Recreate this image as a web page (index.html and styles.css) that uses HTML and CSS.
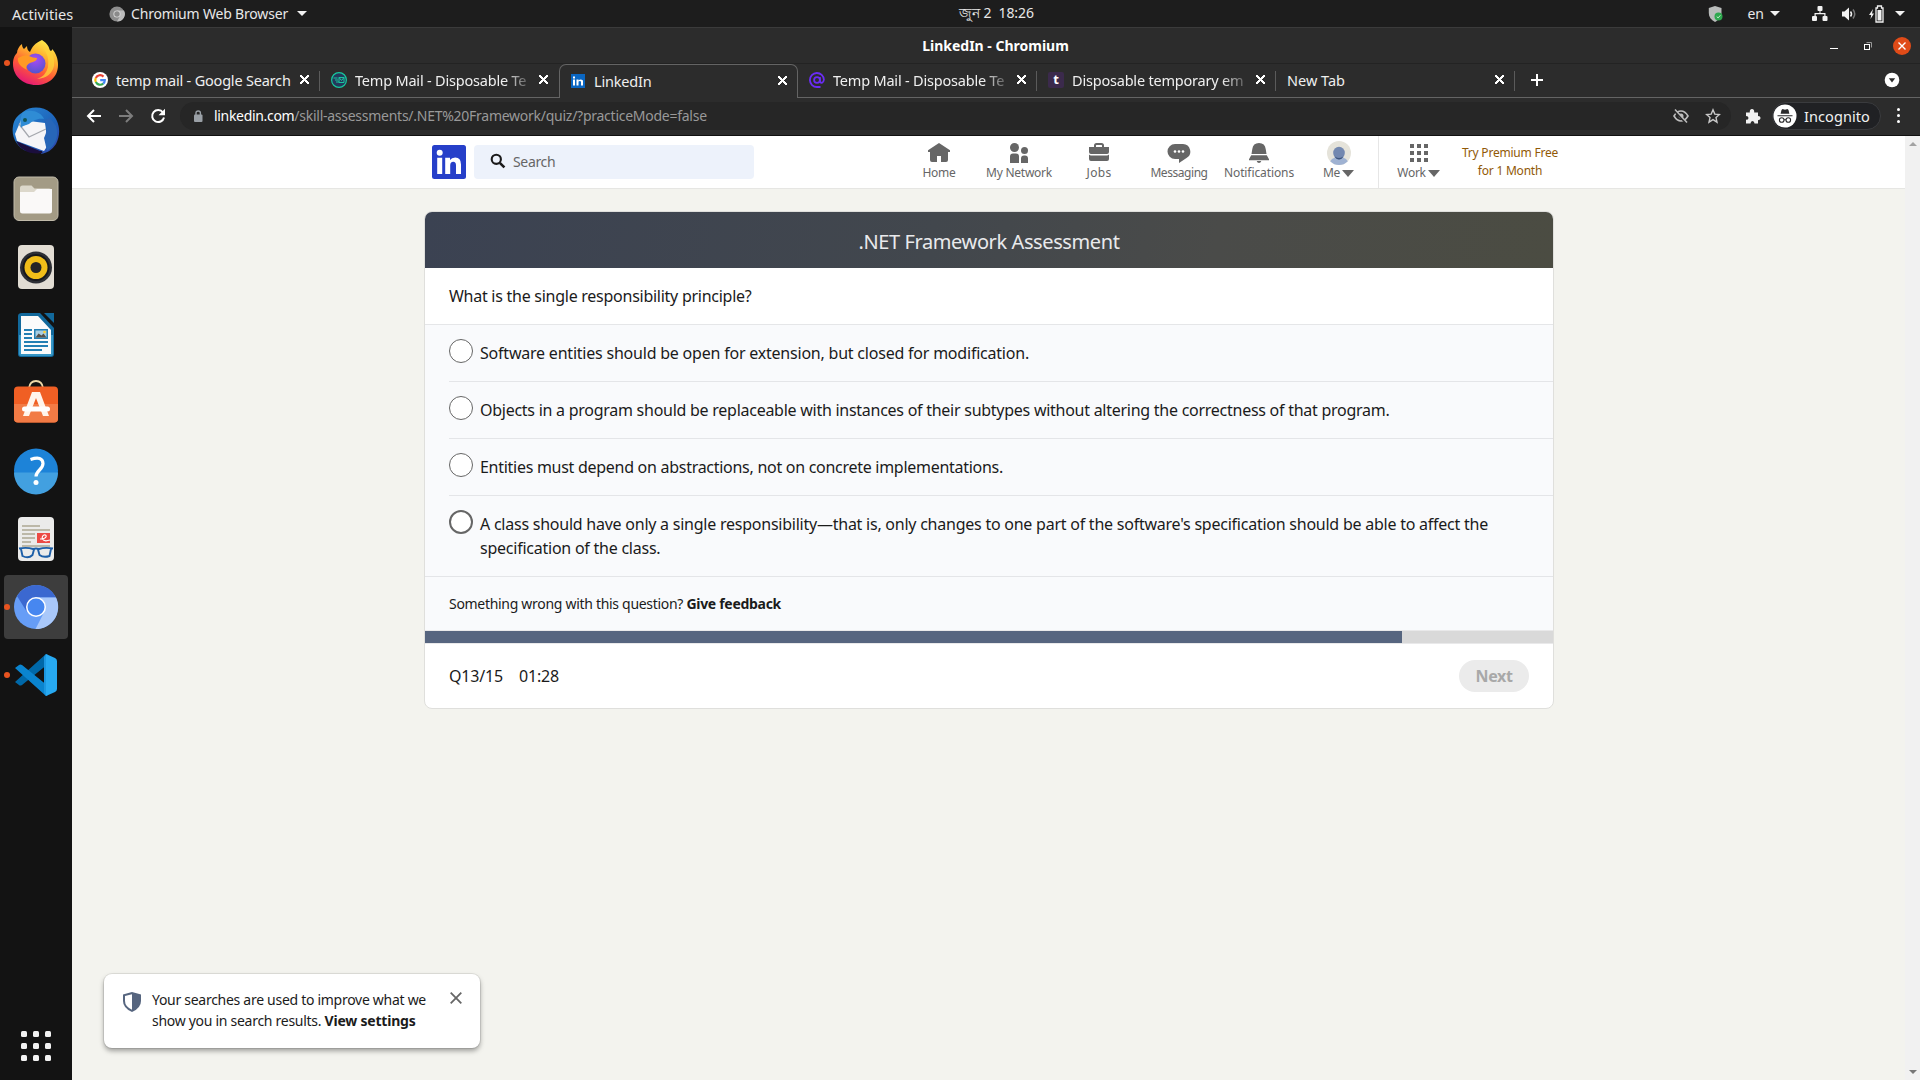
FILE: index.html
```html
<!DOCTYPE html>
<html lang="en">
<head>
<meta charset="utf-8">
<title>LinkedIn - Chromium</title>
<link rel="stylesheet" href="styles.css">
</head>
<body>
<div class="desktop">
  <header class="topbar">
    <div class="top-left">
      <span class="activities">Activities</span>
      <svg class="app-ico" viewBox="0 0 16 16"><circle cx="8" cy="8" r="7.600" fill="#8d8d8d"/><path d="M8 4.400h7A7.600 7.600 0 0 1 8 15.600l3-5.400z" fill="#bdbdbd"/><circle cx="8" cy="8" r="3.600" fill="#dadada"/><circle cx="8" cy="8" r="2.700" fill="#8a8a8a"/></svg>
      <span class="app-name">Chromium Web Browser</span>
      <i class="caret"></i>
    </div>
    <div class="clock">জুন 2&nbsp; 18:26</div>
    <div class="top-right">
      <svg width="16" height="18" viewBox="0 0 16 18"><path d="M7 1l6.500 2v5c0 4-3 7-6.500 9C3 15 .8 12 .8 8V3z" fill="#b9bcbb"/><circle cx="10.500" cy="11.500" r="4" fill="#2fa84f"/><path d="M8.700 11.500l1.400 1.400 2.300-2.600" fill="none" stroke="#c8f0d0" stroke-width="1"/></svg>
      <span class="lang">en</span><i class="caret"></i>
      <svg class="net" width="16" height="16" viewBox="0 0 16 16" fill="#f2f2f2"><rect x="5.500" y="0" width="5" height="5" rx="1"/><rect x="0" y="10" width="5" height="5" rx="1"/><rect x="10.500" y="10" width="5" height="5" rx="1"/><path d="M7.500 4h1v3H13.500V10h-1.200V8.200H3.700V10H2.500V7h5z"/></svg>
      <svg class="vol" width="16" height="16" viewBox="0 0 16 16"><path d="M1 5.500h2.500L8 1.500v13l-4.500-4H1z" fill="#f2f2f2"/><path d="M9.500 5.500q2 2.500 0 5" fill="none" stroke="#f2f2f2" stroke-width="1.500"/><path d="M12 3.500q3.500 4.500 0 9" fill="none" stroke="#777" stroke-width="1.500"/></svg>
      <svg class="bat" width="16" height="18" viewBox="0 0 16 18"><path d="M4 4L0 10h2.200L1.500 14 5 8.500H3z" fill="#f2f2f2"/><path d="M7 3h1.500V1h4v2H14v14H7z" fill="none" stroke="#f2f2f2" stroke-width="1.300"/><rect x="8.500" y="5" width="4" height="10.500" fill="#f2f2f2"/></svg>
      <i class="caret end-caret"></i>
    </div>
  </header>

  <div class="workspace">
    <nav class="dock">
      <div class="slot run"><svg viewBox="0 0 48 48"><defs><linearGradient id="fx" x1=".8" y1="0" x2=".3" y2="1"><stop offset="0" stop-color="#fff44f"/><stop offset=".35" stop-color="#ffb02e"/><stop offset=".65" stop-color="#ff5a36"/><stop offset="1" stop-color="#e3157a"/></linearGradient><radialGradient id="fp" cx=".5" cy=".3" r=".8"><stop offset="0" stop-color="#a94af5"/><stop offset="1" stop-color="#4756c8"/></radialGradient></defs><path d="M30 1c6 4 7 7 8 11 2 0 2-1 2-2 4 4 6 10 6 16 0 12-9 20-22 20S1 37 1 25c0-6 2-9 4-11 0-3 2-7 5-9 0 3 1 4 2 5l3-3c0 3 1 5 3 6 2-5 5-9 12-12z" fill="url(#fx)"/><circle cx="23.500" cy="24.500" r="10" fill="url(#fp)"/><path d="M6 19q7-4 11-2 4 2 8 2c0 3-4 4-7 5-4 2-4 5-3 7-6-3-10-7-9-12z" fill="#ff9a24"/><path d="M30 8q8 8 6 20-2 9-11 12 14-1 17-13 1-10-4-16-4 0-8-3z" fill="#ffd43a" opacity=".75"/></svg></div>
      <div class="slot"><svg viewBox="0 0 48 48"><defs><linearGradient id="tb" x1="0" y1="0" x2="1" y2="1"><stop offset="0" stop-color="#2a8ad6"/><stop offset=".6" stop-color="#1d62b9"/><stop offset="1" stop-color="#3441a8"/></linearGradient></defs><path d="M11 5C18-1 31-1 39 6c8 7 11 19 5 31-4 6-9 9-15 10l1-3H14C5 40-1 30 1 19 2 12 6 8 11 5z" fill="url(#tb)"/><path d="M3 27l6-14 24 3 3 22-4 6L5 34z" fill="#f5f5f7"/><path d="M7 17l10 13 17-8" fill="none" stroke="#a5a8ae" stroke-width="1.300"/><path d="M11 5c9-3 18 0 21 7-7-1-11 2-15 5-4 2-6 1-8 4-1-5-1-11 2-16z" fill="#2f8cd5"/><circle cx="13" cy="13" r="2" fill="#155"/><path d="M4 34l24 10 3 2C18 48 9 44 4 34z" fill="#1b0e3d"/><path d="M32 13c4 6 3 12 0 18l3 13c9-6 12-15 9-25l-6-8z" fill="#2766b8"/></svg></div>
      <div class="slot"><svg viewBox="0 0 48 48"><rect x="2" y="2" width="44" height="43.500" rx="5" fill="#a39b85" stroke="#c1bbaa"/><path d="M8 17V13q0-2.500 2.500-2.500h9l3 3H37q3 0 3 3v4z" fill="#dcd8cb"/><path d="M8 17h14l3-3h15v22q0 2.500-2.500 2.500h-27Q8 38.500 8 36z" fill="#faf9f8"/></svg></div>
      <div class="slot"><svg viewBox="0 0 48 48"><rect x="6" y="2" width="36" height="44" rx="4" fill="#e2ddd4"/><circle cx="24" cy="24.500" r="16" fill="#2d2f35"/><circle cx="24" cy="24.500" r="13.500" fill="#17181c"/><circle cx="24" cy="24.500" r="11.500" fill="#f0bd19"/><circle cx="24" cy="24.500" r="5.500" fill="#232427"/></svg></div>
      <div class="slot"><svg viewBox="0 0 48 48"><path d="M10 2h18l14 15v26q0 3-3 3H9q-3 0-3-3V5q0-3 4-3z" fill="#12699c"/><path d="M7 24h34v19q0 2-2 2H9q-2 0-2-2z" fill="#3796c5"/><path d="M9 5h17l13 14v24H9z" fill="#fbfbfb"/><path d="M32 2h10v10z" fill="#12699c"/><path d="M12 18h8v2h-8zM12 22h8v2h-8zM12 26h8v2h-8zM12 30h24v2H12zM12 34h24v2H12zM12 38h18v2H12z" fill="#247fb3"/><rect x="22" y="18" width="14" height="10" fill="#247fb3"/><rect x="23.500" y="19.500" width="11" height="7" fill="#a7cde2"/><path d="M23.500 26.500l3-4 3 2 2-2 3 4z" fill="#55504a"/><circle cx="32.500" cy="21" r="1.300" fill="#ffd02e"/></svg></div>
      <div class="slot"><svg viewBox="0 1 48 48"><path d="M17 10q1-7 7-7t7 7" fill="none" stroke="#eed9a8" stroke-width="1.800"/><rect x="2" y="8.500" width="44" height="36" rx="4" fill="#f05f24"/><path d="M2 26h44v14.500q0 4-4 4H6q-4 0-4-4z" fill="#f27b45"/><path d="M20 14h8l9 24h-6l-7-18-7 18h-6z" fill="#fff5ec"/><rect x="10" y="28.500" width="28" height="5" rx="2.500" fill="#fff"/></svg></div>
      <div class="slot"><svg viewBox="0 .5 48 48"><circle cx="24" cy="24" r="22" fill="#1d83d8"/><path d="M2 26h44a22 22 0 0 1-44 0z" fill="#42a0e0"/><path d="M18.500 13q12-4 12.500 4c0 6-7 7-7 13" fill="none" stroke="#fff" stroke-width="3.200"/><circle cx="24" cy="36" r="2.500" fill="#fff"/></svg></div>
      <div class="slot"><svg viewBox="0 0 48 48"><rect x="6" y="2" width="36" height="44" rx="4" fill="#ebebea"/><path d="M10 10h18v2H10zM10 14h28v2H10zM10 18h13v2H10zM10 22h13v2H10zM10 26h9v2h-9zM10 30h28v2H10z" fill="#bcb8a8"/><rect x="25" y="18" width="13" height="10" fill="#ec4a44"/><path d="M28 24c8 0 7-5 4-4s-3 8 6 5" fill="none" stroke="#fff" stroke-width="1.200"/><path d="M7 33.500q8-1.500 14 .5 3-1 6 0 6-2 14-.5M9 34l1.500 7q6 3 10-1l1.500-5.500M39 34l-1.500 7q-6 2-10-1L26 34.500" fill="none" stroke="#1d5fa8" stroke-width="1.900"/></svg></div>
      <div class="slot run focused"><svg viewBox="0 0 48 48"><circle cx="24" cy="24" r="22" fill="#669df6"/><path d="M5 13A22 22 0 0 1 44 14.500H24L15 29z" fill="#3b68d0"/><path d="M44 14.500H25l8 13-9.500 18.500A22 22 0 0 0 44 14.500z" fill="#a9c8fa"/><circle cx="24" cy="24" r="10" fill="#fff"/><circle cx="24" cy="24" r="8.500" fill="#4787f0"/></svg></div>
      <div class="slot run"><svg viewBox="0 0 48 48"><path d="M3 31l4 3q1 1 3 0L36 13V4l-2-1z" fill="#0068a8"/><path d="M3 17l4-3q1-1 3 0l26 21v9l-2 1z" fill="#0a84cf"/><path d="M34 3l9 4q2 1 2 3v28q0 2-2 3l-9 4V3z" fill="#27a9f1"/><path d="M34 3q-1 1-2 3v36q1 2 2 3V3z" fill="#1c96e0"/></svg></div>
      <div class="apps"><b></b><b></b><b></b><b></b><b></b><b></b><b></b><b></b><b></b></div>
    </nav>

    <div class="window">
      <div class="titlebar">
        <span class="win-title">LinkedIn - Chromium</span>
        <div class="win-btns">
          <svg width="10" height="10" viewBox="0 0 10 10"><path d="M1 7.500h8" stroke="#fff"/></svg>
          <svg width="10" height="10" viewBox="0 0 10 10" fill="none"><rect x="1.500" y="3.500" width="5" height="5" stroke="#fff"/><path d="M3.500 1.500h5v5" stroke="#999"/></svg>
          <svg width="18" height="18" viewBox="0 0 18 18"><circle cx="9" cy="9" r="9" fill="#e04b18"/><path d="M5.500 5.500l7 7m0-7l-7 7" stroke="#fff" stroke-width="1.400"/></svg>
        </div>
      </div>
      <div class="tabs">
        <div class="edge"></div>
        <div class="tab"><svg class="fav" viewBox="0 0 16 16"><circle cx="8" cy="8" r="8" fill="#fff"/><g fill="none" stroke-width="2.200"><path d="M11.500 4.600A4.800 4.800 0 0 0 3.800 5.900" stroke="#ea4335"/><path d="M3.800 5.900a4.800 4.800 0 0 0 0 4.200" stroke="#fbbc05"/><path d="M3.800 10.100a4.800 4.800 0 0 0 7.400 1.500" stroke="#34a853"/><path d="M11.200 11.600A4.500 4.500 0 0 0 12.800 8.200H8.200" stroke="#4285f4"/></g></svg><span class="tab-t">temp mail - Google Search</span><i class="x"></i></div>
        <div class="tab"><svg class="fav" viewBox="0 0 16 16"><circle cx="8" cy="8" r="7.400" fill="#24385b" stroke="#17c9a0" stroke-width="1.200"/><path d="M2.500 6h4M4 8h3M5 10h3M8 5.500h5v5H8zM8 5.500l2.500 3 2.500-3" fill="none" stroke="#18c79e"/></svg><span class="tab-t fade">Temp Mail - Disposable Te</span><i class="x"></i></div>
        <div class="tab active"><svg class="fav" viewBox="0 0 16 16"><rect x="1" y="1" width="14" height="14" fill="#0a66c2"/><path d="M3 6.500h2v6H3zM3 3.500h2v2H3zM6.500 6.500h2v1q2-2 4.500 0v5h-2V8.500q-1.200-1-2.500 0v4h-2z" fill="#fff"/></svg><span class="tab-t">LinkedIn</span><i class="x"></i></div>
        <div class="tab"><svg class="fav" viewBox="0 0 16 16"><circle cx="8" cy="8" r="2.900" fill="none" stroke="#6b2cf5" stroke-width="1.800"/><path d="M10.900 5v4q.3 2 2 1.800 1.800-.6 2-3A7 7 0 1 0 8 15h3.500" fill="none" stroke="#6b2cf5" stroke-width="1.800"/></svg><span class="tab-t fade">Temp Mail - Disposable Te</span><i class="x"></i></div>
        <div class="tab"><span class="fav tfav">t</span><span class="tab-t fade">Disposable temporary em</span><i class="x"></i></div>
        <div class="tab"><span class="tab-t wide">New Tab</span><i class="x"></i></div>
        <div class="tab-rest"><svg width="14" height="14" viewBox="0 0 14 14"><path d="M7 1v12M1 7h12" stroke="#fff" stroke-width="2"/></svg><svg width="16" height="16" viewBox="0 0 16 16"><circle cx="8" cy="8" r="7.300" fill="#fff"/><path d="M4.800 6.200h6.400L8 10.500z" fill="#2c2c2c"/></svg></div>
      </div>
      <div class="toolbar">
        <svg class="tico" viewBox="0 0 16 16"><path d="M15 8H2.500M8 2L2 8l6 6" fill="none" stroke="#fff" stroke-width="2"/></svg>
        <svg class="tico" viewBox="0 0 16 16"><path d="M1 8h12.500M8 2l6 6-6 6" fill="none" stroke="#7d7d7d" stroke-width="2"/></svg>
        <svg class="tico" viewBox="0 0 16 16"><path d="M13 4.500A6 6 0 1 0 14 9.500" fill="none" stroke="#fff" stroke-width="2"/><path d="M15 .8v6.500H8.500z" fill="#fff"/></svg>
        <div class="omni">
          <svg width="10" height="12" viewBox="0 0 10 12"><rect x="1" y="4.500" width="8.500" height="7.500" rx="1" fill="#9aa0a6"/><path d="M3 5V3q0-2 2.200-2t2.200 2v2" fill="none" stroke="#9aa0a6" stroke-width="1.400"/></svg>
          <span class="url"><b>linkedin.com</b>/skill-assessments/.NET%20Framework/quiz/?practiceMode=false</span>
          <svg class="oi" viewBox="0 0 16 16"><path d="M1 8q3-5 7-5t7 5q-3 5-7 5T1 8z" fill="none" stroke="#bdbdbd" stroke-width="1.600"/><circle cx="8" cy="8" r="2.500" fill="#bdbdbd"/><path d="M1.500 3l11.500 12" stroke="#282828" stroke-width="2"/><path d="M2 1.500l12 13" stroke="#bdbdbd" stroke-width="1.500"/></svg>
          <svg class="oi" viewBox="0 0 16 16"><path d="M8 1.800l1.800 4.300 4.700.4-3.500 3.100 1 4.600-4-2.500-4 2.500 1-4.600L1.500 6.500l4.700-.4z" fill="none" stroke="#c8c8c8" stroke-width="1.400"/></svg>
        </div>
        <svg class="puz" viewBox="0 0 16 16"><path d="M1 4.500h3.800Q4.500 1 7 1t2.200 3.500H13V8q2.600.1 2.600 2T13 12.200V15.500H9.500Q9.400 13 7.500 13t-2 2.500H1V11.800q2.500-.1 2.500-1.900T1 8z" fill="#f2f2f2"/></svg>
        <div class="incog"><svg width="24" height="24" viewBox="0 0 24 24"><circle cx="12" cy="12" r="11.500" fill="#fff"/><path d="M8.500 6l1-1 2.500.7 2.500-.7 1 1 .9 3.800H7.600zM4.500 11.300h15v1h-15z" fill="#2a2a2c"/><g fill="none" stroke="#2a2a2c" stroke-width="1.100"><circle cx="8.700" cy="16" r="2.300"/><circle cx="15.300" cy="16" r="2.300"/><path d="M11 15.700h2"/></g></svg><span>Incognito</span></div>
        <div class="dots"><b></b><b></b><b></b></div>
      </div>

      <div class="viewport">
        <div class="page">
          <header class="li-head">
            <svg class="logo" viewBox="0 0 34 34"><rect width="34" height="34" rx="2.500" fill="#263fc9"/><circle cx="7.700" cy="7.700" r="3" fill="#fff"/><path d="M5.200 12.800h5V29h-5zM13.200 12.800H18V15q1.600-2.600 5.200-2.600 5.800 0 5.800 7V29h-5v-8.600q0-3.700-2.700-3.700-3.100 0-3.100 3.700V29h-5z" fill="#fff"/></svg>
            <div class="search"><svg width="16" height="16" viewBox="0 0 16 16"><circle cx="6.300" cy="6.300" r="4.600" fill="none" stroke="#1b1b1b" stroke-width="2.100"/><path d="M9.800 9.800l4.600 4.600" stroke="#1b1b1b" stroke-width="2.600"/></svg><span>Search</span></div>
            <nav class="li-nav">
              <a><svg viewBox="0 0 24 22"><path d="M12 1l11 7.200v1.800h-2v8q0 2-2 2h-5v-6h-4v6H5q-2 0-2-2v-8H1V8.200z"/></svg><span>Home</span></a>
              <a><svg viewBox="0 0 24 22"><circle cx="7.500" cy="5.500" r="4.500"/><circle cx="17.500" cy="8.500" r="3.500"/><path d="M3 21v-6.500q0-3 3-3h3q3 0 3 3V21zM14 21v-4.500q0-3 3-3h1q3 0 3 3V21z"/></svg><span>My Network</span></a>
              <a><svg viewBox="0 0 24 22"><path d="M7 5V3.500Q7 1 9.500 1h5Q17 1 17 3.500V5h5v5q0 2-2 2H4q-2 0-2-2V5zm2 0h6V3.500q0-.5-.5-.5h-5q-.5 0-.5.500zM2 12.500q1 .9 2 .9h16q1 0 2-.9V17q0 2-2 2H4q-2 0-2-2z"/></svg><span class="jobs">Jobs</span></a>
              <a><svg viewBox="0 0 24 22"><path d="M8 2h8a7.500 7.500 0 0 1 3.500 14L12 21v-4H8A7.500 7.500 0 0 1 8 2z"/><g fill="#fff"><circle cx="8" cy="9.500" r="1.300"/><circle cx="12" cy="9.500" r="1.300"/><circle cx="16" cy="9.500" r="1.300"/></g></svg><span class="msg">Messaging</span></a>
              <a><svg viewBox="0 0 24 22"><path d="M12 1q6 0 6.700 6l.8 5h-15l.8-5Q6 1 12 1zM4.200 13.200h15.600l2.200 4v1H2v-1zM9.700 19h4.600q-.6 2-2.300 2t-2.300-2z"/></svg><span class="notif">Notifications</span></a>
              <a class="me"><svg viewBox="0 0 24 24"><clipPath id="av"><circle cx="12" cy="12" r="12"/></clipPath><g clip-path="url(#av)"><rect width="24" height="24" fill="#e5e3da"/><path d="M2 24q1-8 10-8t10 8z" fill="#9fb2d2"/><ellipse cx="12" cy="12" rx="5.800" ry="6.200" fill="#7388b0"/><path d="M8 15.500q4 3 8 0-1 3-4 3t-4-3z" fill="#3d547c"/></g></svg><span>Me<i class="tri"></i></span></a>
              <a class="work"><svg viewBox="0 0 24 22"><path d="M3 2h4v4H3zM10 2h4v4h-4zM17 2h4v4h-4zM3 9h4v4H3zM10 9h4v4h-4zM17 9h4v4h-4zM3 16h4v4H3zM10 16h4v4h-4zM17 16h4v4h-4z"/></svg><span>Work<i class="tri"></i></span></a>
            </nav>
            <div class="premium">Try Premium Free<br>for 1 Month</div>
          </header>

          <main class="card">
            <h1>.NET Framework Assessment</h1>
            <p class="question">What is the single responsibility principle?</p>
            <ul class="options">
              <li><i class="radio"></i><span class="opt-a">Software entities should be open for extension, but closed for modification.</span></li>
              <li><i class="radio"></i><span>Objects in a program should be replaceable with instances of their subtypes without altering the correctness of that program.</span></li>
              <li><i class="radio"></i><span class="opt-c">Entities must depend on abstractions, not on concrete implementations.</span></li>
              <li><i class="radio hover"></i><span class="opt-d">A class should have only a single responsibility—that is, only changes to one part of the software's specification should be able to affect the<br>specification of the class.</span></li>
            </ul>
            <div class="feedback">Something wrong with this question? <b>Give feedback</b></div>
            <div class="progress"><div class="bar" style="width:86.620%"></div></div>
            <footer><span>Q13/15</span><span>01:28</span><button>Next</button></footer>
          </main>

          <aside class="toast">
            <svg width="20" height="22" viewBox="0 0 20 22"><path d="M10 1l9 2.500V10q0 7-9 11Q1 17 1 10V3.500z" fill="#56657f"/><path d="M10 3.200v15.500Q3 15.500 3 10V5z" fill="#fff"/></svg>
            <p>Your searches are used to improve what we<br>show you in search results. <b>View settings</b></p>
            <svg class="tx" width="12" height="12" viewBox="0 0 12 12"><path d="M.7.700l10.600 10.600m0-10.600L.7 11.300" stroke="#666" stroke-width="1.800"/></svg>
          </aside>
        </div>
        <div class="scroll"><i class="up"></i><i class="dn"></i></div>
      </div>
    </div>
  </div>
</div>
</body>
</html>
```
FILE: styles.css
```css
* { box-sizing: border-box; }
body { margin: 0; font-family: "Noto Sans", "Open Sans", sans-serif; overflow: hidden; }
svg { display: block; flex: none; }
i { font-style: normal; }
.desktop { width: 1920px; height: 1080px; display: flex; flex-direction: column; background: #131313; }

.topbar { height: 27px; flex: none; background: #1d1d1d; color: #e8e8e8; font-size: 14px; display: grid; grid-template-columns: 947px 76px 1fr; align-items: center; white-space: nowrap; padding-right: 15px; padding-left: 12px; }
.top-left, .top-right { display: flex; align-items: center; }
.activities { width: 97px; font-size: 14.500px; letter-spacing: .1px; }
.app-ico { width: 16px; height: 16px; margin-right: 6px; }
.app-name { width: 160px; letter-spacing: -.18px; }
.clock { letter-spacing: -.08px; }
.caret { border: 5px solid transparent; border-top: 5.500px solid #f2f2f2; border-bottom: 0; margin-left: 6px; }
.top-right { justify-content: flex-end; }
.lang { margin-left: 23px; }
.net { margin-left: 32px; }
.vol { margin-left: 13px; }
.bat { margin-left: 12px; }
.end-caret { margin-left: 10px; }

.workspace { flex: 1; display: flex; min-height: 0; }
.dock { width: 72px; flex: none; background: #131313; padding: 4px 4px 19px; display: flex; flex-direction: column; gap: 4px; }
.slot { height: 64px; border-radius: 4px; display: flex; align-items: center; justify-content: center; position: relative; }
.slot svg { width: 48px; height: 48px; }
.slot.focused { background: #3d3d3d; }
.run::before { content: ""; position: absolute; left: 0; top: 29px; width: 6px; height: 6px; border-radius: 50%; background: #e95420; }
.apps { margin: auto auto 0; display: grid; grid-template-columns: repeat(3, 6px); gap: 6px; }
.apps b { height: 6px; border-radius: 1.500px; background: #f2f2f2; }

.window { flex: 1; min-width: 0; display: flex; flex-direction: column; background: #2c2c2c; border-top: 1px solid #3b3b3b; }
.titlebar { height: 36px; flex: none; display: grid; grid-template-columns: 1fr; align-items: center; border-bottom: 1px solid #232323; color: #fff; }
.win-title { grid-area: 1/1; justify-self: center; font-size: 14px; font-weight: 700; margin-right: 1px; }
.win-btns { grid-area: 1/1; justify-self: end; display: flex; align-items: center; gap: 24px; margin-right: 9px; }
.win-btns svg:last-child { margin-left: -4px; }

.tabs { height: 34px; flex: none; display: flex; color: #efefef; font-size: 14.500px; letter-spacing: -.2px; }
.edge { width: 9px; border-bottom: 1px solid #646464; }
.tab { width: 239px; flex: none; display: flex; align-items: center; padding: 0 11px 2px; border-bottom: 1px solid #646464; position: relative; }
.tab::after { content: ""; position: absolute; right: 0; top: 7px; width: 1px; height: 20px; background: #5b5b5b; }
.tab.active { border: 1px solid #646464; border-bottom: 0; border-radius: 7px 7px 0 0; padding: 0 10px 2px; }
.tab.active::after, .tab:nth-child(3)::after { display: none; }
.fav { width: 16px; height: 16px; margin-right: 8px; flex: none; }
.tfav { background: #3b2a4c; border-radius: 2px; color: #fff; font-weight: 700; font-size: 13px; line-height: 14px; text-align: center; }
.tab-t { width: 177px; overflow: hidden; white-space: nowrap; flex: none; }
.wide { width: 201px; letter-spacing: 0; }
.fade { -webkit-mask-image: linear-gradient(90deg, #000 150px, transparent 180px); mask-image: linear-gradient(90deg, #000 150px, transparent 180px); }
.x { width: 9px; height: 9px; margin-left: 7px; background: linear-gradient(45deg, transparent 44%, #fff 44% 56%, transparent 56%), linear-gradient(-45deg, transparent 44%, #fff 44% 56%, transparent 56%); }
.tab-rest { flex: 1; display: flex; align-items: center; justify-content: space-between; border-bottom: 1px solid #646464; padding: 0 20px 1px 15px; }

.toolbar { height: 38px; flex: none; display: flex; align-items: center; padding: 0 0 2px 14px; border-bottom: 1px solid #111; }
.tico { width: 16px; height: 16px; margin-right: 16px; }
.omni { width: 1551px; height: 28px; margin-left: -2px; border-radius: 14px; background: #262626; display: flex; align-items: center; padding: 0 10px 0 13px; }
.url { margin-left: 11px; margin-right: auto; font-size: 14px; letter-spacing: -.26px; color: #999; white-space: nowrap; }
.url b { color: #fff; font-weight: 400; letter-spacing: -.32px; }
.oi { width: 16px; height: 16px; margin-left: 16px; }
.puz { width: 16px; height: 16px; margin-left: 14px; }
.incog { width: 109px; height: 28px; margin-left: 11px; border: 1px solid #3a3b3e; border-radius: 14px; background: #202124; color: #f1f1f1; font-size: 14.500px; display: flex; align-items: center; gap: 7px; letter-spacing: .08px; }
.dots { margin-left: 16px; display: grid; gap: 3px; }
.dots b { width: 3px; height: 3px; border-radius: 50%; background: #fff; }

.viewport { flex: 1; min-height: 0; display: flex; }
.page { flex: 1; background: #f3f3ee; position: relative; color: #1b1b1b; }
.scroll { width: 15px; background: #f1f1f1; display: flex; flex-direction: column; justify-content: space-between; align-items: center; padding: 6px 0; }
.up, .dn { border: 4px solid transparent; }
.up { border-bottom-color: #a3a3a3; border-top: 0; }
.dn { border-top: 4px solid #777; border-bottom: 0; }

.li-head { height: 53px; background: #fff; border-bottom: 1px solid #e6e6e3; display: flex; align-items: center; padding-left: 360px; }
.logo { width: 34px; height: 34px; }
.search { margin-left: 8px; width: 280px; height: 34px; border-radius: 4px; background: #edf2fb; color: #666; font-size: 14px; letter-spacing: -.35px; display: flex; align-items: center; gap: 7px; padding: 0 0 2px 16px; }
.li-nav { display: flex; margin-left: 145px; height: 52px; }
.li-nav a { width: 80px; display: flex; flex-direction: column; align-items: center; padding-top: 6px; font-size: 12px; line-height: 16px; letter-spacing: -.24px; color: #666; fill: #666; white-space: nowrap; }
.li-nav svg { width: 24px; height: 22px; margin-bottom: 1px; }
.li-nav .jobs { letter-spacing: .3px; }
.li-nav .msg { letter-spacing: -.45px; }
.li-nav .notif { letter-spacing: -.1px; }
.li-nav .me { width: 79px; }
.li-nav .me svg { height: 24px; margin: -1px 0 0; }
.li-nav .work { border-left: 1px solid #e6e6e6; }
.tri { display: inline-block; border: 6px solid transparent; border-top: 7px solid #666; border-bottom: 0; margin-left: 2px; }
.premium { width: 104px; text-align: center; font-size: 12px; line-height: 18px; letter-spacing: -.22px; color: #915907; }

.card { margin: 22px 0 0 352px; width: 1130px; background: #fff; border: 1px solid #dfdfdc; border-radius: 8px; overflow: hidden; font-size: 16px; line-height: 24px; letter-spacing: -.262px; white-space: nowrap; }
h1 { margin: 0; height: 56px; font-size: 20px; font-weight: 400; line-height: 59px; letter-spacing: -.4px; color: #e9eaec; text-align: center; background: linear-gradient(100deg, #3b4252, #42474d 45%, #4a4b49 70%, #4b4c42); }
.question { margin: 0; height: 57px; padding: 16px 24px; border-bottom: 1px solid #e5e6e8; }
.options { list-style: none; margin: 0; padding: 0 0 0 24px; background: #f9fafc; }
.options li { display: flex; padding: 16px 0; border-bottom: 1px solid #e4e5e8; }
.options li:last-child { margin-left: -24px; padding-left: 24px; }
.opt-a { letter-spacing: -.214px; }
.opt-c { letter-spacing: -.28px; }
.opt-d { letter-spacing: -.239px; }
.radio { width: 24px; height: 24px; flex: none; margin: -2px 7px 0 0; border: 1px solid #666; border-radius: 50%; background: #fff; }
.radio.hover { border-width: 2px; }
.feedback { height: 53px; padding: 15px 24px; font-size: 14px; letter-spacing: -.3px; background: #f9fafc; }
.progress { height: 14px; background: #d9d9d9; border-top: 1px solid #e9e9ea; border-bottom: 1px solid #e9e9ea; }
.bar { height: 12px; background: #56657f; }
footer { height: 64px; display: flex; align-items: center; gap: 16px; padding: 0 24px; letter-spacing: -.18px; }
button { margin-left: auto; width: 70px; height: 32px; border: 0; border-radius: 16px; padding: 0; background: #ebebeb; color: #a8a8a8; font: 700 16px "Noto Sans", sans-serif; letter-spacing: -.35px; }

.toast { position: absolute; left: 32px; bottom: 32px; width: 376px; height: 74px; border-radius: 8px; background: #fff; box-shadow: 0 0 0 1px rgba(0,0,0,.08), 0 3px 5px rgba(0,0,0,.35); display: flex; padding: 17px 18px; font-size: 14px; line-height: 21px; letter-spacing: -.285px; }
.toast p { margin: -2px 0 0 10px; white-space: nowrap; }
.toast b { letter-spacing: -.21px; }
.tx { margin: 1px 0 0 auto; }
```
